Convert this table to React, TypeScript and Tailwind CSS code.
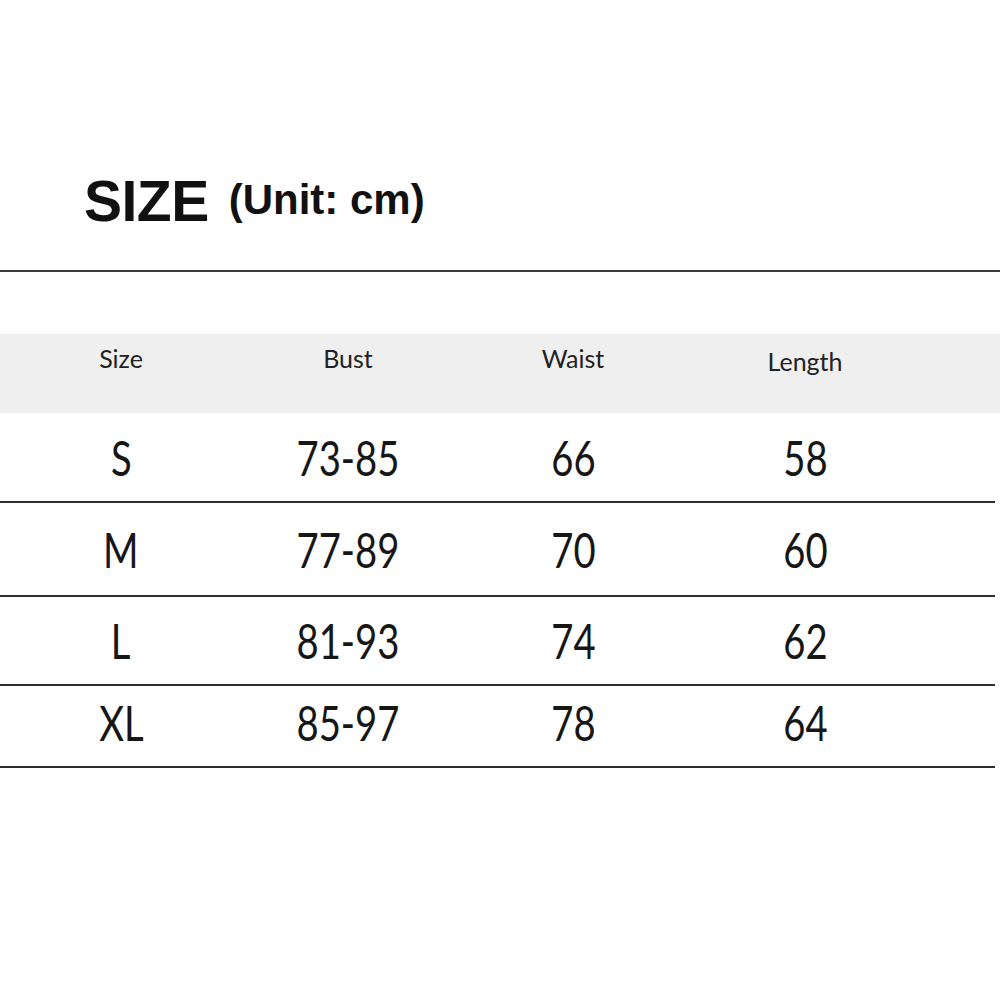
const rows = [
  { size: 'S', bust: '73-85', waist: '66', length: '58', h: 'h-[90px]' },
  { size: 'M', bust: '77-89', waist: '70', length: '60', h: 'h-[94px]' },
  { size: 'L', bust: '81-93', waist: '74', length: '62', h: 'h-[89px]' },
  { size: 'XL', bust: '85-97', waist: '78', length: '64', h: 'h-[82px] pb-[8px]' },
];

const cols = 'grid grid-cols-[242px_212px_238px_226px]';

function Cell({ children }: { children: React.ReactNode }) {
  return (
    <div className="flex justify-center">
      <span className="inline-block scale-x-[0.78] text-[49px] leading-none text-[#161616]">{children}</span>
    </div>
  );
}

export default function App() {
  return (
    <div className="w-[1000px] h-[1000px] bg-white overflow-hidden" style={{ fontFamily: 'Lato, "Open Sans", sans-serif' }}>
      {/* title */}
      <div className="pt-[173px] pl-[84px] flex items-baseline" style={{ fontFamily: '"Liberation Sans", Arial, sans-serif' }}>
        <span className="text-[57px] leading-none font-bold tracking-[-0.5px] text-[#111]">SIZE</span>
        <span className="ml-[20px] -translate-y-[7px] text-[42px] leading-none font-bold text-[#111]">(Unit: cm)</span>
      </div>

      <div className="mt-[40px] h-[2px] w-full bg-[#3c3c3c]" />

      {/* table */}
      <div className="mt-[62px]">
        <div className={`${cols} h-[79px] bg-[#efefef] pt-[12px] items-start text-[25px] leading-none text-[#222]`}>
          <div className="text-center">Size</div>
          <div className="text-center">Bust</div>
          <div className="text-center">Waist</div>
          <div className="text-center translate-y-[3px]">Length</div>
        </div>

        {rows.map((r) => (
          <div key={r.size} className={`${cols} ${r.h} w-[995px] items-center border-b-2 border-[#2e2e2e]`}>
            <Cell>{r.size}</Cell>
            <Cell>{r.bust}</Cell>
            <Cell>{r.waist}</Cell>
            <Cell>{r.length}</Cell>
          </div>
        ))}
      </div>
    </div>
  );
}
